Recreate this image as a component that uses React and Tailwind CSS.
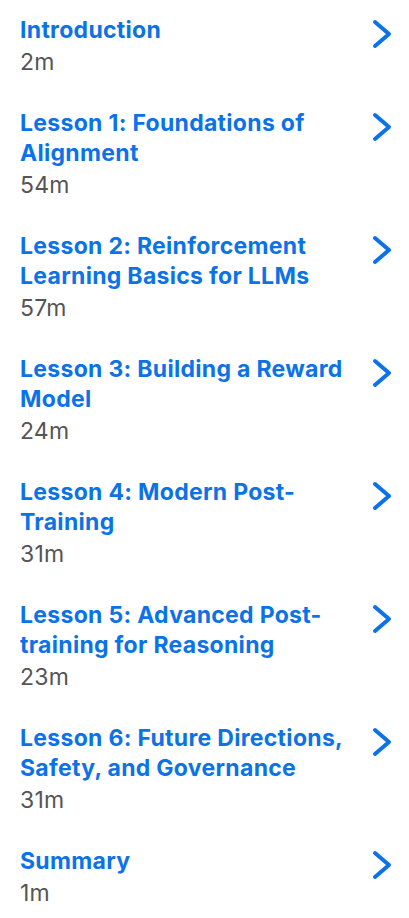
import React from "react";

const items = [
  { title: "Introduction", dur: "2m" },
  { title: "Lesson 1: Foundations of Alignment", dur: "54m" },
  { title: "Lesson 2: Reinforcement Learning Basics for LLMs", dur: "57m" },
  { title: "Lesson 3: Building a Reward Model", dur: "24m" },
  { title: "Lesson 4: Modern Post-Training", dur: "31m" },
  { title: "Lesson 5: Advanced Post-training for Reasoning", dur: "23m" },
  { title: "Lesson 6: Future Directions, Safety, and Governance", dur: "31m" },
  { title: "Summary", dur: "1m" },
];

function Chevron() {
  return (
    <svg width="20" height="30" viewBox="0 0 20 30" className="shrink-0">
      <polyline
        points="3,3 17,15 3,27"
        fill="none"
        stroke="#0b72e7"
        strokeWidth="4"
        strokeLinecap="round"
        strokeLinejoin="round"
      />
    </svg>
  );
}

export default function App() {
  return (
    <div
      className="w-[409px] min-h-[918px] bg-white pl-5 pr-[17px] pt-[15px]"
      style={{ fontFamily: "Inter, 'Noto Sans', sans-serif" }}
    >
      <div className="flex flex-col gap-[29px]">
        {items.map((it) => (
          <div key={it.title} className="flex items-start justify-between">
            <div className="w-[340px]">
              <div className="text-[23px] leading-[30px] font-bold text-[#0b72e7] tracking-[0.3px]">
                {it.title}
              </div>
              <div className="text-[23px] leading-[34px] text-[#555555] tracking-[0.2px]">
                {it.dur}
              </div>
            </div>
            <div className="pt-[4px]">
              <Chevron />
            </div>
          </div>
        ))}
      </div>
    </div>
  );
}
